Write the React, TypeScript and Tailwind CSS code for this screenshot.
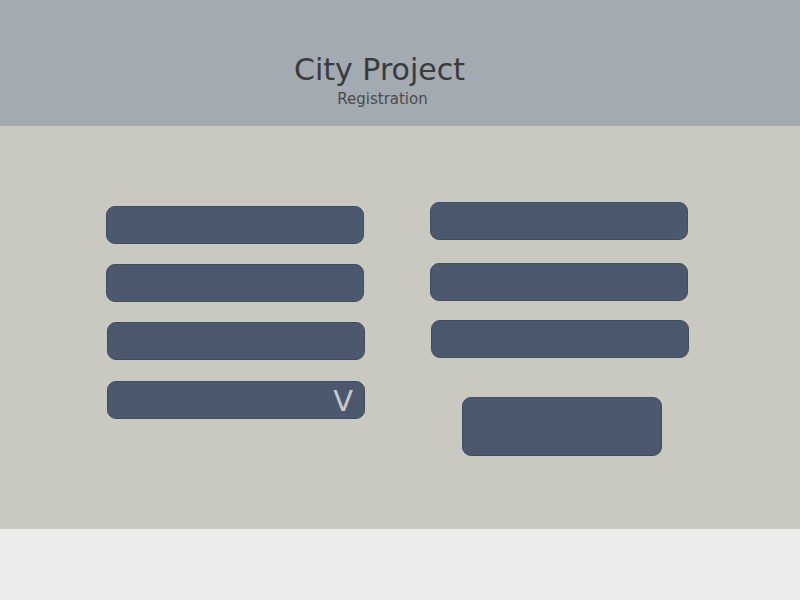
import React from "react";

const box = "h-[38px] w-[258px] rounded-[9px] bg-[#4b586d] border border-[#424d60]";

export default function App() {
  return (
    <div className="w-[800px] h-[600px] bg-[#ebebeb] flex flex-col" style={{ fontFamily: '"DejaVu Sans", sans-serif' }}>
      <header className="h-[126px] bg-[#a3aab1] flex flex-col items-center pt-[51px] pr-[40px]">
        <h1 className="text-[30px] leading-[38px] text-[#3b3b3b] ml-[-1px]">City Project</h1>
        <p className="text-[15px] leading-[18px] text-[#4a4a4a] ml-[5px] mt-px">Registration</p>
      </header>
      <main className="h-[403px] bg-[#c9c8c1] flex pl-[106px] gap-[65px]">
        <div className="flex flex-col pt-[80px]">
          <div className={box} />
          <div className={`${box} mt-[20px]`} />
          <div className={`${box} mt-[20px] ml-px`} />
          <div className={`${box} mt-[21px] ml-px flex items-center justify-end pr-[11px]`}>
            <span className="text-[29px] leading-none text-[#c9cbcc] mt-[2px]">V</span>
          </div>
        </div>
        <div className="flex flex-col pt-[76px]">
          <div className={box} />
          <div className={`${box} mt-[23px]`} />
          <div className={`${box} mt-[19px] ml-px h-[37px]`} />
          <div className="mt-[39px] ml-[32px] w-[200px] h-[59px] rounded-[9px] bg-[#4b586d] border border-[#424d60]" />
        </div>
      </main>
    </div>
  );
}
